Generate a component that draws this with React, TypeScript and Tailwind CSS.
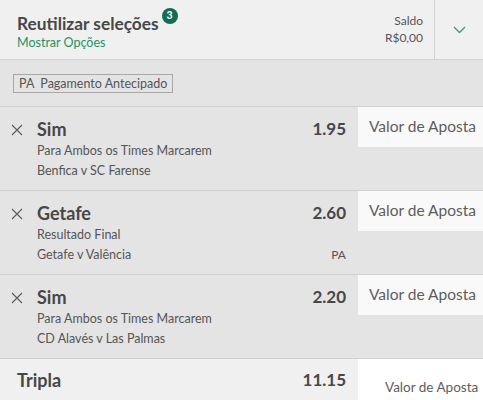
import React from 'react';

const font = { fontFamily: 'Lato, "Open Sans", Arial, sans-serif' };

type Bet = { pick: string; market: string; event: string; odds: string; pa?: boolean };

const bets: Bet[] = [
  { pick: 'Sim', market: 'Para Ambos os Times Marcarem', event: 'Benfica v SC Farense', odds: '1.95' },
  { pick: 'Getafe', market: 'Resultado Final', event: 'Getafe v Valência', odds: '2.60', pa: true },
  { pick: 'Sim', market: 'Para Ambos os Times Marcarem', event: 'CD Alavés v Las Palmas', odds: '2.20' },
];

function CloseIcon() {
  return (
    <svg width="12" height="12" viewBox="0 0 12 12" className="shrink-0">
      <path d="M1 1L11 11M11 1L1 11" stroke="#5a5a5a" strokeWidth="1.1" fill="none" />
    </svg>
  );
}

function BetRow({ bet }: { bet: Bet }) {
  return (
    <div className="flex h-[84px] border-b border-[#d0d0d0] bg-[#e4e4e4]">
      <div className="flex flex-1 pl-[11px] pr-[12px]">
        <div className="pt-[17px]">
          <CloseIcon />
        </div>
        <div className="ml-[14px] flex-1 pt-[11px]">
          <div className="flex items-center justify-between">
            <span className="text-[18px] font-bold leading-[22px] text-[#474747]">{bet.pick}</span>
            <span className="text-[17px] font-bold leading-[22px] text-[#474747]">{bet.odds}</span>
          </div>
          <div className="mt-[1px] text-[12.5px] leading-[20px] text-[#555]">{bet.market}</div>
          <div className="flex justify-between text-[12.5px] leading-[20px] text-[#555]">
            <span>{bet.event}</span>
            {bet.pa && <span className="text-[12px]">PA</span>}
          </div>
        </div>
      </div>
      <div className="w-[125px]">
        <div className="flex h-[40px] items-center bg-[#f9f9f9] pl-[11px] text-[15.5px] text-[#5d5d5d]">
          Valor de Aposta
        </div>
      </div>
    </div>
  );
}

export default function App() {
  return (
    <div className="h-[400px] w-[483px] overflow-hidden bg-[#e4e4e4]" style={font}>
      <div className="flex h-[60px] border-b border-[#d2d2d2] bg-[#f0f0f0]">
        <div className="flex-1 pl-[17px] pt-[12px]">
          <div className="flex items-start">
            <span className="text-[17.3px] font-bold leading-[24px] text-[#474747]">Reutilizar seleções</span>
            <span className="ml-[3px] -mt-[4px] flex h-[16px] w-[16px] items-center justify-center rounded-full bg-[#126e51] text-[10.5px] font-bold text-white">
              3
            </span>
          </div>
          <div className="-mt-[1px] text-[12.5px] leading-[16px] text-[#26906a]">Mostrar Opções</div>
        </div>
        <div className="flex flex-col items-end pr-[11px] pt-[12px] text-[12px] leading-[17px] text-[#555]">
          <span>Saldo</span>
          <span>R$0,00</span>
        </div>
        <div className="flex w-[49px] items-center justify-center border-l border-[#d2d2d2]">
          <svg width="13" height="8" viewBox="0 0 13 8">
            <path d="M1 1L6.5 6.5L12 1" stroke="#3e9a74" strokeWidth="1.3" fill="none" />
          </svg>
        </div>
      </div>
      <div className="flex h-[47px] items-center border-b border-[#d0d0d0] px-[13px]">
        <span className="border border-[#a8a8a8] px-[5px] text-[12.5px] leading-[17px] text-[#555]">
          PA&nbsp; Pagamento Antecipado
        </span>
      </div>
      {bets.map((b, i) => (
        <BetRow key={i} bet={b} />
      ))}
      <div className="flex h-[50px] bg-[#f0f0f0]">
        <div className="flex flex-1 items-start justify-between pl-[17px] pr-[12px] pt-[9px]">
          <span className="text-[18px] font-bold leading-[24px] text-[#474747]">Tripla</span>
          <span className="text-[17px] font-bold leading-[24px] text-[#474747]">11.15</span>
        </div>
        <div className="w-[125px] bg-white pl-[27px] pt-[18px] text-[13.5px] text-[#5d5d5d]">Valor de Aposta</div>
      </div>
    </div>
  );
}
